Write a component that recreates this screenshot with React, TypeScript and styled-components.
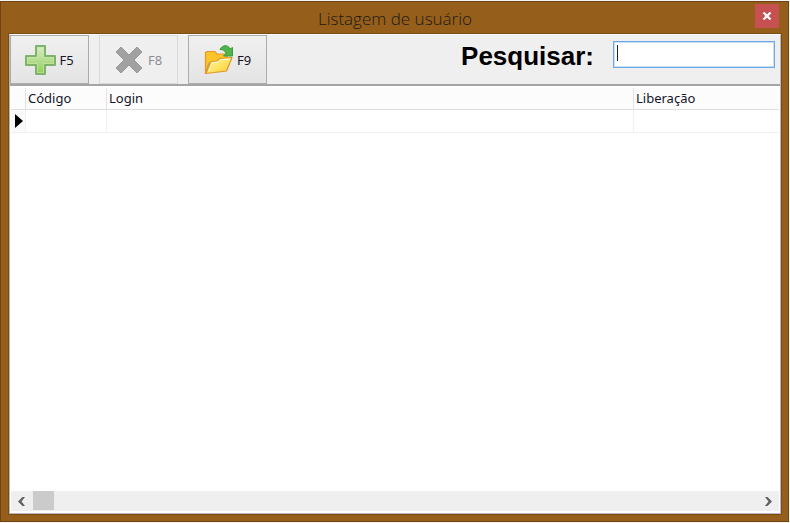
import React from 'react';
import styled, { createGlobalStyle } from 'styled-components';

const GlobalStyle = createGlobalStyle`
  *, *::before, *::after { box-sizing: border-box; }
  html, body, #root { height: 100%; margin: 0; }
  body { background: #f4f4f4; overflow: hidden; }
  button, input { font: inherit; margin: 0; padding: 0; }
`;

const Desktop = styled.div`
  height: 100vh;
  padding: 1px 1px 1px 0;
  font-family: 'Noto Sans', 'Open Sans', sans-serif;
  font-size: 13px;
  color: #15152a;
`;

const Window = styled.main`
  height: 100%;
  display: flex;
  flex-direction: column;
  padding: 0 7px 7px 8px;
  background: #955e1a;
  border: 1px solid #704310;
`;

const TitleBar = styled.header`
  display: grid;
  grid-template-columns: 1fr auto 1fr;
  height: 32px;
  flex: none;
`;

const Title = styled.h1`
  grid-column: 2;
  margin: 0;
  padding-top: 4px;
  font-family: 'Open Sans', 'Noto Sans', sans-serif;
  font-size: 17px;
  line-height: 25px;
  font-weight: 300;
  color: #1c1a18;
`;

const CloseButton = styled.button`
  justify-self: end;
  display: grid;
  place-items: center;
  width: 24px;
  height: 24px;
  margin: 2px 2px 0 0;
  border: 0;
  background: #c75050;
`;

const Client = styled.div`
  flex: 1;
  min-height: 0;
  display: flex;
  flex-direction: column;
  background: #fff;
  border: 1px solid #b4b7c0;
  border-top-color: #fff;
  outline: 1px solid #7d4c12;
  outline-offset: 0;
`;

const Toolbar = styled.div`
  display: flex;
  flex: none;
  align-items: flex-start;
  height: 51px;
  background: #efefef;
  border-bottom: 2px solid #a5a5a5;
`;

const Actions = styled.div`
  display: flex;
  gap: 10px;
`;

const ActionButton = styled.button`
  display: flex;
  align-items: center;
  justify-content: center;
  gap: 3px;
  width: 79px;
  height: 49px;
  color: #15152a;
  background: linear-gradient(#f0f0f0, #e4e4e4);
  border: 1px solid #acacac;
  &:disabled {
    color: #8c8c94;
    background: #efefef;
    border-color: #dadada;
  }
`;

const Search = styled.label`
  display: flex;
  align-items: flex-start;
  gap: 19px;
  margin-left: auto;
  padding: 6px 5px 0 0;
`;

const SearchText = styled.span`
  font: bold 26px/30px 'Liberation Sans', Arial, sans-serif;
  color: #000;
`;

const SearchInput = styled.input`
  width: 162px;
  height: 27px;
  padding: 0 6px;
  border: 1px solid #69a8e6;
  box-shadow: inset 0 0 0 1px #c9e0f7;
  background: linear-gradient(#222, #222) 3px 3px / 1px 16px no-repeat #fff;
  caret-color: transparent;
  outline: none;
`;

const GridArea = styled.section`
  flex: 1;
  min-height: 0;
  padding: 2px 1px 0;
`;

const Table = styled.table`
  width: 100%;
  table-layout: fixed;
  border-collapse: separate;
  border-spacing: 0;
`;

const cell = `
  padding: 0 0 0 2px;
  line-height: 21px;
  text-align: left;
  font-weight: 400;
  &:last-child { border-right: 0; }
`;

const HeadCell = styled.th`
  ${cell}
  height: 22px;
  background: #fcfcfc;
  border-right: 1px solid #e3e3e3;
  border-bottom: 1px solid #dedede;
`;

const Cell = styled.td`
  ${cell}
  height: 23px;
  border-right: 1px solid #f0f0f0;
  border-bottom: 1px solid #f0f0f0;
`;

const MarkerCell = styled(Cell)`
  background: #fafafa;
  svg { display: block; margin-left: 2px; }
`;

const Column = styled.col<{ $width?: number }>`
  ${({ $width }) => ($width ? `width: ${$width}px;` : '')}
`;

const Scrollbar = styled.div`
  display: flex;
  flex: none;
  height: 20px;
  margin: 0 1px 2px;
  background: #efefef;
`;

const ScrollButton = styled.button`
  display: grid;
  place-items: center;
  width: 22px;
  border: 0;
  background: transparent;
`;

const Track = styled.div`
  flex: 1;
`;

const Thumb = styled.div`
  width: 21px;
  height: 19px;
  background: #cbcbcb;
`;

const AddIcon = () => (
  <svg width="31" height="30" viewBox="0 0 31 30" aria-hidden="true">
    <defs>
      <linearGradient id="green" x1="0" y1="0" x2="0" y2="1">
        <stop offset="0" stopColor="#d9edc6" />
        <stop offset="1" stopColor="#93cd58" />
      </linearGradient>
    </defs>
    <path d="M11 1h9v10h10v9H20v9h-9v-9H1v-9h10z" fill="url(#green)" stroke="#7db36c" strokeWidth="2" strokeLinejoin="round" />
    <path d="M12.500 2.500h6v10h10v6h-10v9h-6v-9h-10v-6h10z" fill="none" stroke="#cbe8ac" strokeOpacity=".6" />
  </svg>
);

const DeleteIcon = () => (
  <svg width="30" height="30" viewBox="0 0 30 30" aria-hidden="true">
    <path d="M6 2l8 8 8-8 5 5-8 8 8 8-5 5-8-8-8 8-5-5 8-8-8-8z" fill="#a1a1a1" stroke="#999" strokeLinejoin="round" />
  </svg>
);

const FolderIcon = () => (
  <svg width="30" height="32" viewBox="0 0 30 32" aria-hidden="true">
    <defs>
      <linearGradient id="folder" x1="0" y1="0" x2="1" y2="1">
        <stop offset="0" stopColor="#fff5a8" />
        <stop offset=".5" stopColor="#ffe566" />
        <stop offset="1" stopColor="#f9c72c" />
      </linearGradient>
    </defs>
    <path d="M1.500 29.500V8.500L3 7.500h8l2 2.500h10v7L5 19z" fill="#fbc32c" stroke="#df982c" strokeWidth="1.200" strokeLinejoin="round" />
    <path d="M2 29.500L7 17.500l6-.5 2.500-2.500L28 13.500 22.500 27z" fill="url(#folder)" stroke="#df982c" strokeWidth="1.200" strokeLinejoin="round" />
    <path d="M4.500 27.500L8 18.800l5.500-.5 2.500-2.500 10-.8" fill="none" stroke="#fffbd6" />
    <path d="M16 5.500c2-4.500 8-5.500 10-.5l2.500-1.500v8.500h-9l2.500-2.500c-1-3-3-4-6-4z" fill="#4fb548" stroke="#3b9c40" strokeLinejoin="round" />
  </svg>
);

const CloseIcon = () => (
  <svg width="10" height="8" viewBox="0 0 10 8" aria-hidden="true">
    <path d="M1.500 0.500l7 7M8.500 0.500l-7 7" stroke="#fff" strokeWidth="2.200" />
  </svg>
);

const RowMarker = () => (
  <svg width="8" height="14" viewBox="0 0 8 14" aria-hidden="true">
    <path d="M0 0l8 7-8 7z" fill="#000" />
  </svg>
);

const Chevron = ({ right = false }: { right?: boolean }) => (
  <svg width="8" height="9" viewBox="0 0 8 9" aria-hidden="true">
    <path d={right ? 'M1 0h2.500L8 4.500 3.500 9H1l3.500-4.500z' : 'M7 0H4.500L0 4.500 4.500 9H7L3.500 4.500z'} fill="#606060" />
  </svg>
);

export default function App() {
  return (
    <>
      <GlobalStyle />
      <Desktop>
        <Window>
          <TitleBar>
            <Title>Listagem de usuário</Title>
            <CloseButton type="button" aria-label="Fechar"><CloseIcon /></CloseButton>
          </TitleBar>
          <Client>
            <Toolbar>
              <Actions>
                <ActionButton type="button"><AddIcon />F5</ActionButton>
                <ActionButton type="button" disabled><DeleteIcon />F8</ActionButton>
                <ActionButton type="button"><FolderIcon />F9</ActionButton>
              </Actions>
              <Search>
                <SearchText>Pesquisar:</SearchText>
                <SearchInput type="text" />
              </Search>
            </Toolbar>
            <GridArea>
              <Table>
                <colgroup>
                  <Column $width={15} />
                  <Column $width={81} />
                  <Column />
                  <Column $width={145} />
                </colgroup>
                <thead>
                  <tr>
                    <HeadCell aria-label="Linha atual" />
                    <HeadCell scope="col">Código</HeadCell>
                    <HeadCell scope="col">Login</HeadCell>
                    <HeadCell scope="col">Liberação</HeadCell>
                  </tr>
                </thead>
                <tbody>
                  <tr>
                    <MarkerCell><RowMarker /></MarkerCell>
                    <Cell />
                    <Cell />
                    <Cell />
                  </tr>
                </tbody>
              </Table>
            </GridArea>
            <Scrollbar>
              <ScrollButton type="button" aria-label="Rolar para a esquerda"><Chevron /></ScrollButton>
              <Track><Thumb /></Track>
              <ScrollButton type="button" aria-label="Rolar para a direita"><Chevron right /></ScrollButton>
            </Scrollbar>
          </Client>
        </Window>
      </Desktop>
    </>
  );
}
